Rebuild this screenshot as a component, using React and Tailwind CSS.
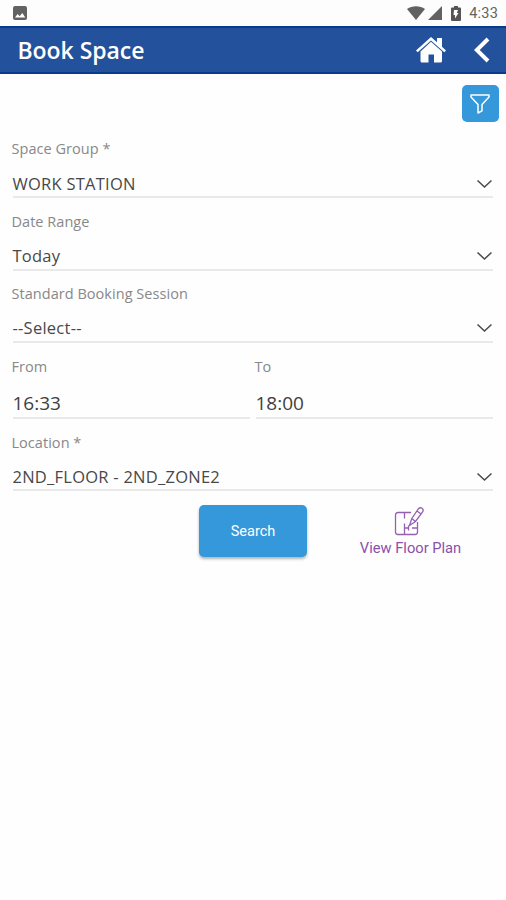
const labelClass =
  "block w-max whitespace-nowrap text-[14.5px] leading-5 tracking-[0.04px] text-[#888]";

function Chevron() {
  return (
    <svg className="mr-px h-[10px] w-4 shrink-0" viewBox="0 0 16 10" fill="none" stroke="#4a4a4a" strokeWidth="1.5">
      <path d="M1.500 1.500 8.500 8l7-6.500" />
    </svg>
  );
}

function SelectField({ label, value, height, valueGap = "mt-[12px]" }) {
  return (
    <div className={`flex flex-col border-b-2 border-[#e9e9e9] ${height}`}>
      <span className={`-ml-[1.5px] ${labelClass}`}>{label}</span>
      <div className={`flex items-center justify-between ${valueGap}`}>
        <span className="-ml-[0.5px] whitespace-nowrap text-[16.5px] leading-6 tracking-[0.25px] text-[#484848]">{value}</span>
        <Chevron />
      </div>
    </div>
  );
}

function TimeField({ label, value, width }) {
  return (
    <div className={`flex h-[76px] flex-col border-b-2 border-[#e9e9e9] pt-[14px] ${width}`}>
      <span className={`-ml-[1.5px] ${labelClass}`}>{label}</span>
      <span className="-ml-[0.5px] mt-[12px] text-[19px] leading-7 text-[#404040]">{value}</span>
    </div>
  );
}

function StatusBar() {
  return (
    <div className="flex h-[26px] items-center bg-[#fdfdfd] pl-[13px] pr-[8px]">
      <svg className="h-[14px] w-[14px]" viewBox="0 0 14 14">
        <rect width="14" height="14" rx="2" fill="#626262" />
        <path d="M2 11.5 4.6 8l2 2.3L9.3 7l3 4.5z" fill="#fff" />
      </svg>
      <div className="ml-auto flex items-center">
        <svg className="h-[14px] w-[18px]" viewBox="0 0 18 14">
          <path d="M0 3C5-.6 13-.6 18 3L9 14z" fill="#626262" />
        </svg>
        <svg className="ml-[3px] h-[14px] w-[14px]" viewBox="0 0 14 14">
          <path d="M14 0v14H0z" fill="#626262" />
        </svg>
        <svg className="ml-[9px] h-[15px] w-[10px]" viewBox="0 0 10 15">
          <path d="M3 0h4v1.500h2q1 0 1 1V14q0 1-1 1H1q-1 0-1-1V2.500q0-1 1-1h2z" fill="#555" />
          <path d="M3 4h4L5.800 7H7.500L4 12.500V9H2.500z" fill="#fff" />
        </svg>
        <span className="ml-[8px] pt-[2px] font-['Roboto',sans-serif] text-[14.5px] leading-5 tracking-[0.2px] text-[#626262]">4:33</span>
      </div>
    </div>
  );
}

export default function App() {
  return (
    <main className="h-[900px] w-[506px] overflow-hidden bg-[#fefefe] font-['Open_Sans',sans-serif]">
      <StatusBar />
      <header className="flex h-12 items-center border-y-2 border-[#063c8b] bg-[#23519b] pl-[17.5px] pr-[16px]">
        <h1 className="text-[23px] font-semibold leading-8 tracking-[-0.05px] text-white">Book Space</h1>
        <svg className="ml-auto h-[26px] w-[30px]" viewBox="0 0 30 26" fill="#fff">
          <path d="M15 0 21 5.300V1h5v8.700l4 3.700-1.700 1.900L15 3.500 1.700 15.300 0 13.400z" />
          <path d="M15 4.800 26 14.500V24q0 1.500-1.500 1.500H18v-8h-5.500v8H6q-1.500 0-1.500-1.500v-9.500z" />
        </svg>
        <svg className="ml-[28px] h-[26px] w-4" viewBox="0 0 16 26" fill="none" stroke="#fff" strokeWidth="4">
          <path d="M14 2 2.800 13 14 24" />
        </svg>
      </header>
      <div className="flex h-[51px] justify-end pr-[7px] pt-[11px]">
        <button className="flex h-[37px] w-[37px] items-center justify-center rounded-[5px] bg-[#3498db] pr-[2px]">
          <svg className="h-5 w-5" viewBox="0 0 20 20" fill="none" stroke="#fff" strokeWidth="1.500" strokeLinejoin="round">
            <path d="M1 1h18v2l-7 7.500v6.300L8 19v-8.500L1 3z" />
          </svg>
        </button>
      </div>
      <form className="pl-[13px] pr-[13px]">
        <SelectField label="Space Group *" value="WORK STATION" height="h-[73px] pt-[14px]" valueGap="mt-[13px]" />
        <SelectField label="Date Range" value="Today" height="h-[73px] pt-[14px]" />
        <SelectField label="Standard Booking Session" value="--Select--" height="h-[72px] pt-[13px]" />
        <div className="flex justify-between">
          <TimeField label="From" value="16:33" width="w-[237px]" />
          <TimeField label="To" value="18:00" width="w-[237px]" />
        </div>
        <SelectField label="Location *" value="2ND_FLOOR - 2ND_ZONE2" height="h-[72px] pt-[14px]" />
      </form>
      <div className="flex pl-[199px] pt-[14px] font-['Roboto',sans-serif]">
        <button type="button" className="h-[52px] w-[108px] rounded-[5px] bg-[#3498db] pt-[2px] text-[14.5px] text-white shadow-[0_2px_3px_rgba(0,0,0,0.3)]">
          Search
        </button>
        <a className="ml-[52px] flex w-[103px] flex-col items-center text-[#8a50aa]">
          <svg className="mr-[3px] mt-[1px] h-[30px] w-[30px]" viewBox="0 0 30 30" fill="none" stroke="#9460b2" strokeWidth="1.300">
            <path d="M17 6.500H4Q1.500 6.500 1.500 9v17Q1.500 28.500 4 28.500h17q2.500 0 2.500-2.500V16M10.500 6.500v6M10.500 17.500v11M10.500 22H15M18 22h5.500M14.500 19.500v5" />
            <path d="M15.500 19.500 17.800 12.500 24.300 3Q26 1 28 2.300T28.600 6L21.500 15.500zM17.800 12.500l3.700 3M23 5l4 3" />
          </svg>
          <span className="mt-[2px] whitespace-nowrap text-[14.700px] leading-5">View Floor Plan</span>
        </a>
      </div>
    </main>
  );
}
